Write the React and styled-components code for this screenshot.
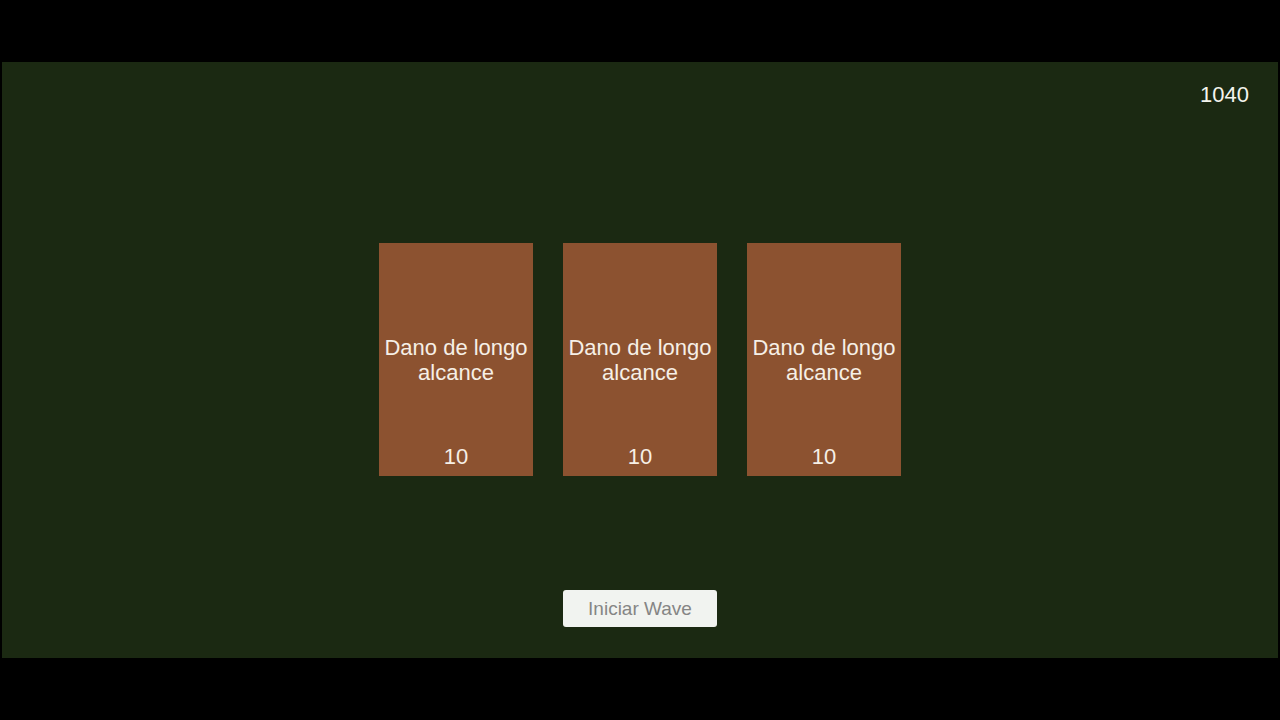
import React from 'react'
import styled, { createGlobalStyle } from 'styled-components'

const Global = createGlobalStyle`
  html, body {
    margin: 0;
    padding: 0;
    background: #000;
    font-family: "Liberation Sans", Arial, sans-serif;
  }
`

const Screen = styled.div`
  box-sizing: border-box;
  width: 1280px;
  height: 720px;
  padding: 62px 2px;
  background: #000;
`

const Board = styled.div`
  height: 100%;
  background: #1b2912;
  display: flex;
  flex-direction: column;
  align-items: center;
`

const Hud = styled.div`
  align-self: stretch;
  display: flex;
  justify-content: flex-end;
  padding: 20px 29px 0 0;
  height: 25px;
`

const Score = styled.span`
  color: #f4f4ee;
  font-size: 22px;
  line-height: 25px;
`

const Hand = styled.div`
  margin-top: 136px;
  display: flex;
  gap: 30px;
`

const Card = styled.div`
  box-sizing: border-box;
  width: 154px;
  height: 233px;
  background: #8c5230;
  color: #f6efe6;
  display: flex;
  flex-direction: column;
  align-items: center;
  padding: 92px 4px 7px;
  text-align: center;
`

const CardTitle = styled.div`
  font-size: 22px;
  line-height: 25px;
  flex: 1;
`

const CardValue = styled.div`
  font-size: 22px;
  line-height: 25px;
`

const StartBtn = styled.button`
  margin-top: 114px;
  width: 154px;
  height: 37px;
  border: none;
  border-radius: 3px;
  background: #f1f3f0;
  color: #858585;
  font-family: "Liberation Sans", Arial, sans-serif;
  font-size: 19px;
  cursor: pointer;
`

const cards = [
  { title: 'Dano de longo alcance', value: 10 },
  { title: 'Dano de longo alcance', value: 10 },
  { title: 'Dano de longo alcance', value: 10 },
]

export default function App() {
  return (
    <>
      <Global />
      <Screen>
        <Board>
          <Hud>
            <Score>1040</Score>
          </Hud>
          <Hand>
            {cards.map((c, i) => (
              <Card key={i}>
                <CardTitle>{c.title}</CardTitle>
                <CardValue>{c.value}</CardValue>
              </Card>
            ))}
          </Hand>
          <StartBtn>Iniciar Wave</StartBtn>
        </Board>
      </Screen>
    </>
  )
}
